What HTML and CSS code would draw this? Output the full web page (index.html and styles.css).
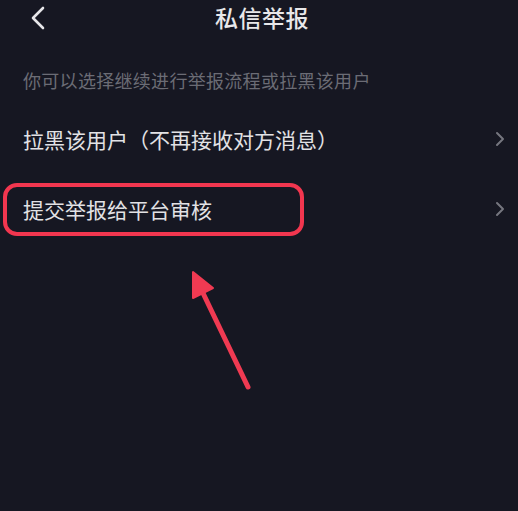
FILE: index.html
```html
<!DOCTYPE html>
<html lang="zh-CN">
<head>
    <meta charset="UTF-8">
    <meta name="viewport" content="width=device-width, initial-scale=1.0">
    <title>私信举报</title>
    <link rel="stylesheet" href="styles.css">
</head>
<body>
    <div class="page">
        <div class="header">
            <span class="back">
                <svg width="16" height="24" viewBox="0 0 16 24">
                    <path d="M13 2 L3 12 L13 22" fill="none" stroke="#e6e6e9" stroke-width="2.6" stroke-linecap="round" stroke-linejoin="round"/>
                </svg>
            </span>
            <h1 class="title">私信举报</h1>
        </div>

        <p class="hint">你可以选择继续进行举报流程或拉黑该用户</p>

        <div class="list">
            <div class="row">
                <span class="label">拉黑该用户（不再接收对方消息）</span>
                <svg class="chev" width="10" height="16" viewBox="0 0 10 16">
                    <path d="M2 2 L8 8 L2 14" fill="none" stroke="#75767f" stroke-width="2" stroke-linecap="round" stroke-linejoin="round"/>
                </svg>
            </div>
            <div class="row">
                <span class="label">提交举报给平台审核</span>
                <svg class="chev" width="10" height="16" viewBox="0 0 10 16">
                    <path d="M2 2 L8 8 L2 14" fill="none" stroke="#75767f" stroke-width="2" stroke-linecap="round" stroke-linejoin="round"/>
                </svg>
                <div class="mark"></div>
            </div>
        </div>

        <!-- annotation arrow pointing at the highlighted row -->
        <svg class="arrow" width="80" height="140" viewBox="0 0 80 140">
            <line x1="68" y1="127" x2="22" y2="31" stroke="#f03a52" stroke-width="5" stroke-linecap="round"/>
            <polygon points="13,12 13,38 33,28" fill="#f03a52" stroke="#f03a52" stroke-width="2" stroke-linejoin="round"/>
        </svg>
    </div>
</body>
</html>
```

FILE: styles.css
```css
html, body {
    margin: 0;
    padding: 0;
    background: #161722;
}
body {
    font-family: "Noto Sans CJK SC", "Noto Sans", sans-serif;
    width: 518px;
    height: 511px;
    overflow: hidden;
}
.page {
    position: relative;
    height: 511px;
}
.header {
    position: relative;
    height: 34px;
    display: flex;
    align-items: center;
    justify-content: center;
}
.back {
    position: absolute;
    left: 30px;
    top: 6px;
    display: flex;
}
.title {
    margin: 0 0 0 6px;
    font-size: 23px;
    font-weight: 500;
    line-height: 30px;
    color: #e8e8ea;
    letter-spacing: 0.5px;
}
.hint {
    margin: 36px 0 0 0;
    padding-left: 23px;
    font-size: 18px;
    line-height: 20px;
    color: #6b6c75;
    letter-spacing: 0.3px;
}
.list {
    margin-top: 14px;
}
.row {
    position: relative;
    height: 70px;
    display: flex;
    align-items: center;
    justify-content: space-between;
    padding: 0 13px 0 23px;
}
.label {
    font-size: 21px;
    line-height: 26px;
    color: #e2e2e5;
}
.chev {
    display: block;
}
.mark {
    position: absolute;
    left: 3px;
    top: 9px;
    width: 293px;
    height: 45px;
    border: 4.5px solid #f2364f;
    border-radius: 14px;
}
.arrow {
    position: absolute;
    left: 180px;
    top: 260px;
}
```
